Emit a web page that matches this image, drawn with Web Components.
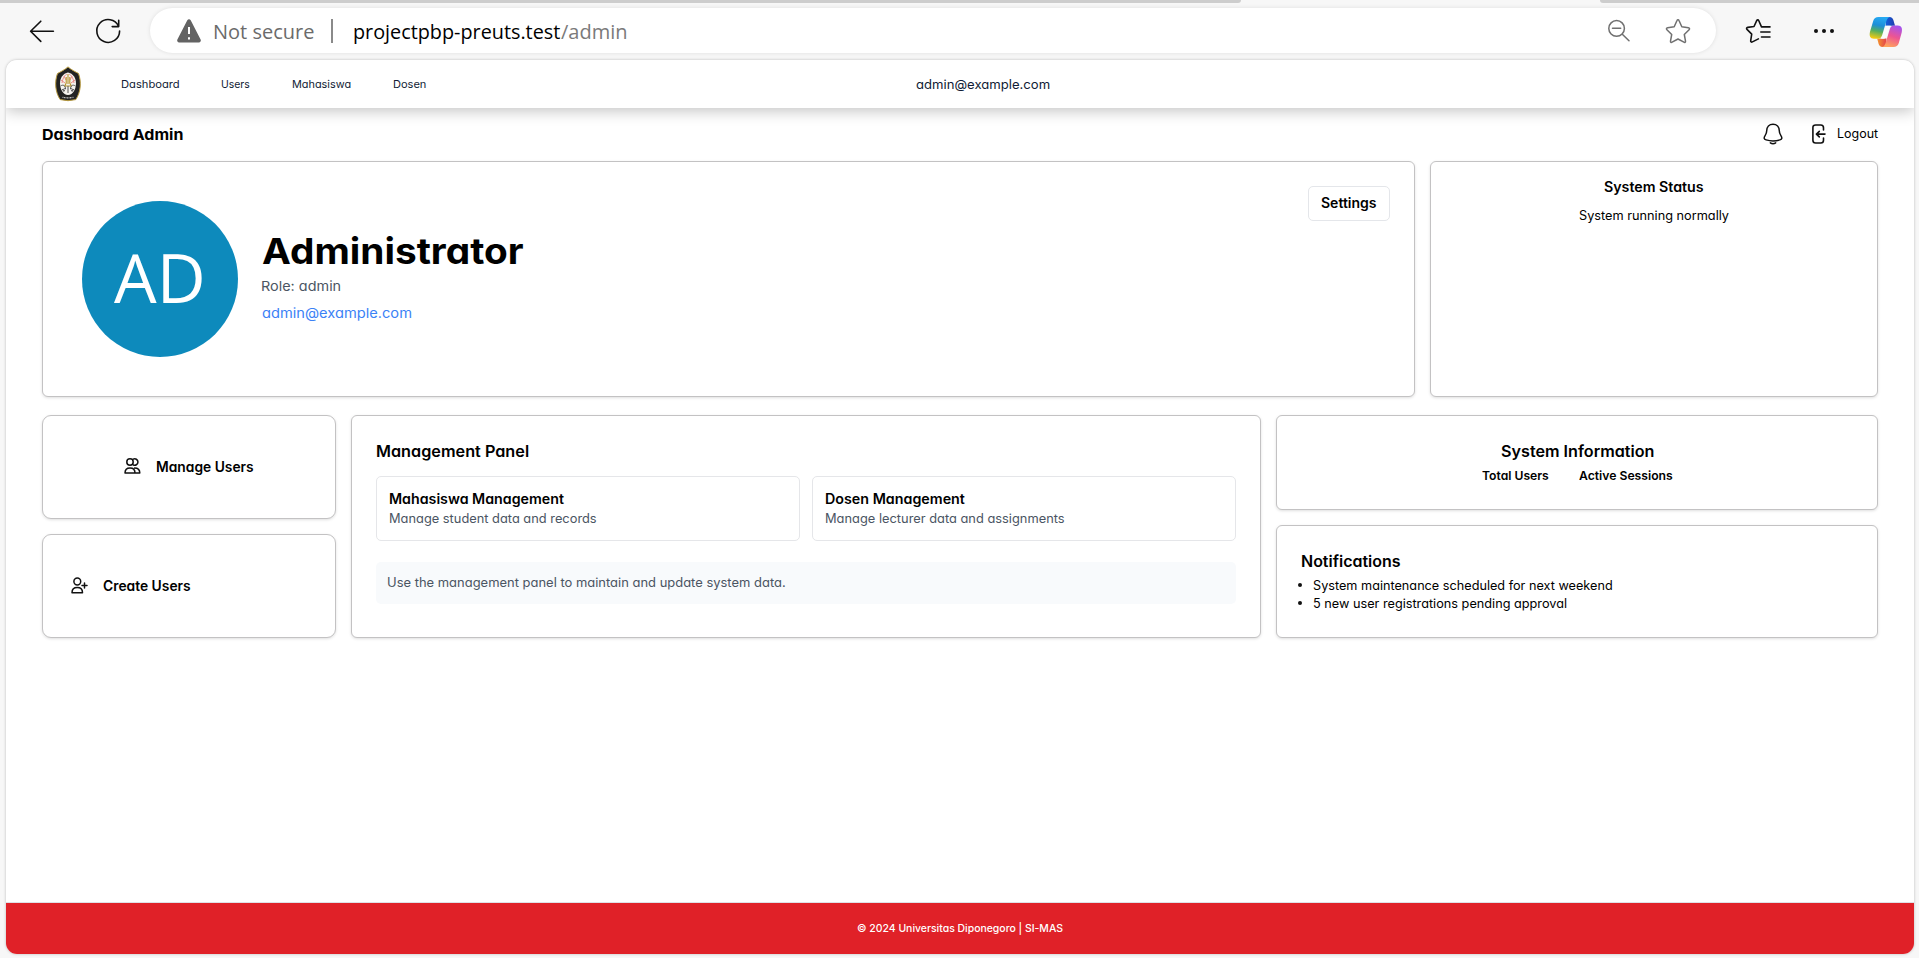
<!DOCTYPE html>
<html lang="id">
<head>
<meta charset="utf-8">
<title>Dashboard Admin</title>
<style>
html,body{margin:0;height:100%;overflow:hidden;background:#f7f7f7}
body{font-family:Inter,"Liberation Sans",sans-serif;color:#000}
</style>
</head>
<body>
<app-window></app-window>
<script>
const make=(name,html,after)=>customElements.define(name,class extends HTMLElement{
  connectedCallback(){
    if(!this.shadowRoot){this.attachShadow({mode:'open'}).innerHTML=html;}
    if(after)after(this);
  }
});

/* Single line label: widens its letters so that the ink spans the width in "w". */
const pen=document.createElement('canvas').getContext('2d');
function fit(el){
  const s=el.shadowRoot.querySelector('span'),w=+el.getAttribute('w');
  const size=el.getAttribute('size')||12.5,weight=el.getAttribute('weight')||400;
  el.style.fontSize=size+'px';el.style.fontWeight=weight;
  const t=el.textContent.trim();
  pen.font=`${weight} ${size}px ${getComputedStyle(el).fontFamily}`;
  const m=pen.measureText(t),bl=-m.actualBoundingBoxLeft,br=m.width-m.actualBoundingBoxRight;
  const ink=s.getBoundingClientRect().width-bl-br;
  const k=w/ink;
  s.style.transform=`scaleX(${k})`;
  s.style.marginLeft=-bl*k+'px';
  el.style.width=w+'px';
}

make('app-window',`<style>
:host{display:flex;flex-direction:column;height:958px;width:1919px}
.page{margin:8px 5px 4px 6px;flex:1;min-height:0;background:#fff;border-radius:11px;overflow:hidden;box-shadow:0 0 3px rgba(0,0,0,.25);display:flex;flex-direction:column}
main{flex:1;padding:0 36px;display:flex;flex-direction:column}
.top{display:grid;grid-template-columns:1373px 448px;gap:15px;height:236px}
.bottom{display:grid;grid-template-columns:294px 910px 602px;gap:15px;height:223px;margin-top:18px}
.col{display:flex;flex-direction:column;gap:15px}
.col>*{flex:1}.col .info{flex:none;height:95px}
</style>
<browser-bar></browser-bar>
<div class="page"><site-nav></site-nav>
<main><page-heading></page-heading>
<div class="top"><profile-card></profile-card><status-card></status-card></div>
<div class="bottom">
<div class="col"><action-card kind="users"><ui-text w="97" size="14" weight="600">Manage Users</ui-text></action-card>
<action-card kind="create"><ui-text w="88" size="14" weight="600">Create Users</ui-text></action-card></div>
<management-panel></management-panel>
<div class="col"><system-info class="info"></system-info><notice-card></notice-card></div>
</div></main><site-footer></site-footer></div>`);

make('browser-bar',`<style>
:host{display:block;height:52px;background:#f7f7f7;font-family:"Open Sans","Noto Sans",sans-serif}
.tabs{height:3px;display:flex;justify-content:space-between}
.tabs i{background:#cdcdcd;width:1241px;border-bottom-right-radius:3px}.tabs i+i{width:319px;border-radius:0 0 0 4px}
.row{display:flex;align-items:center;height:57px;box-sizing:border-box;padding:0 0 2px 28px}
svg{display:block;flex:none}
.url{width:1566px;height:45px;margin-left:28px;border-radius:23px;background:#fff;box-shadow:0 0 4px rgba(0,0,0,.1);display:flex;align-items:center;color:#6b6b6b}
.sep{width:1.5px;height:24px;background:#8a8a8a;margin:0 21px 0 17px}
ui-text{padding-top:1px}
</style><div class="tabs"><i></i><i></i></div>
<div class="row">
<svg width="28" height="26" viewBox="0 0 28 26" fill="none" stroke="#111" stroke-width="1.6" stroke-linecap="round" stroke-linejoin="round"><path d="M12.8 3.2 2.6 13.2l10.2 10.2M2.8 13.2h22.6"/></svg>
<svg style="margin-left:38px" width="28" height="28" viewBox="0 0 28 28" fill="none" stroke="#111" stroke-width="1.6" stroke-linecap="round" stroke-linejoin="round"><path d="M24.6 9.3A11.4 11.4 0 1 0 25.6 14M24.7 3.2v6.4h-6.5"/></svg>
<div class="url">
<svg style="margin-left:27px" width="24" height="24" viewBox="0 0 24 24"><path d="M10.3 1.3a2 2 0 0 1 3.4 0l9.9 19.3a2 2 0 0 1-1.8 2.9H2.2a2 2 0 0 1-1.8-2.9z" fill="#636363"/><path d="M12 8v7M12 18.2v2.2" stroke="#fff" stroke-width="2"/></svg>
<ui-text style="margin-left:14px" w="99" size="20.5">Not secure</ui-text><span class="sep"></span>
<ui-text style="color:#000" w="206" size="20.5">projectpbp-preuts.test</ui-text><ui-text style="margin-left:1px;color:#7a7a7a" w="65" size="20.5">/admin</ui-text>
<svg style="margin-left:981px" width="24" height="24" viewBox="0 0 24 24" fill="none" stroke="#707070" stroke-width="1.5" stroke-linecap="round"><circle cx="9.6" cy="9.4" r="7.8"/><path d="M15.3 15.2l6.7 6.6M5.5 9.2h8.2"/></svg>
<svg style="margin-left:34px" width="26" height="26" viewBox="0 0 26 26" fill="none" stroke="#707070" stroke-width="1.5" stroke-linejoin="round"><path d="M13 1.7c.5 0 .8.3 1 .8l2.8 6.2 6.6 1c1.2.2 1.5 1.2.7 2l-4.8 4.8 1.2 6.7c.1 1-.7 1.5-1.6 1L13 21l-5.9 3.2c-.9.5-1.7 0-1.6-1l1.2-6.7-4.8-4.8c-.8-.8-.5-1.8.7-2l6.6-1L12 2.5c.2-.5.5-.8 1-.8z"/></svg>
</div>
<svg style="margin-left:29px" width="26" height="26" viewBox="0 0 26 26" fill="none" stroke="#111" stroke-width="1.6" stroke-linecap="round" stroke-linejoin="round"><path d="M16.5 8.9 13.8 2.7c-.5-1.1-1.6-1.1-2.1 0L9 8.5l-6.3.9c-1.2.2-1.5 1.2-.7 2l4.7 4.7-1 6.6c-.2 1.2.7 1.7 1.7 1.2l6-3M16.5 8.9H25M15.8 14H25M16.5 19H25"/></svg>
<svg style="margin-left:42px;margin-top:1px" width="22" height="6" viewBox="0 0 22 6" fill="#111"><circle cx="3" cy="3" r="2"/><circle cx="11" cy="3" r="2"/><circle cx="19" cy="3" r="2"/></svg>
<svg style="margin-left:34px;margin-top:3px" width="34" height="30" viewBox="0 0 34 30"><defs>
<linearGradient id="a" x1=".5" y1="0" x2=".3" y2="1"><stop stop-color="#26a9f2"/><stop offset=".38" stop-color="#1d8ed8"/><stop offset=".65" stop-color="#54ae60"/><stop offset="1" stop-color="#f7cb10"/></linearGradient>
<linearGradient id="b" x1=".7" y1="0" x2=".35" y2="1"><stop stop-color="#a553ee"/><stop offset=".5" stop-color="#ed5592"/><stop offset="1" stop-color="#ffa45c"/></linearGradient>
<linearGradient id="c"><stop stop-color="#1260db"/><stop offset="1" stop-color="#203cad"/></linearGradient><linearGradient id="d"><stop stop-color="#f5992e"/><stop offset="1" stop-color="#e3404c"/></linearGradient></defs>
<path d="M17 0h3.500c2.300 0 3.300 1.300 4 3.500L26 8.800h-9.500z" fill="url(#c)"/>
<path d="M17 30h-3.500c-2.300 0-3.300-1.300-4-3.500L8.200 21.500h9.300z" fill="url(#d)"/>
<path d="M9.500 0H21c-2 .4-3 2-4 5.200l-3.900 13c-.9 2.500-2 3.500-4.600 3.500H5C1 21.700.1 18.500 1 14.700L4.200 4C5 1.200 6.700 0 9.500 0z" fill="url(#a)"/>
<path d="M24.500 30H13c2-.4 3-2 4-5.200l3.900-13c.9-2.300 2-3.200 4.600-3.200h3.200c4 0 4.900 3.200 4 7L29.800 26c-.8 2.800-2.500 4-5.300 4z" fill="url(#b)"/>
<path d="M17.200 8.800h4.600c-1 .6-1.400 1.500-1.800 2.800l-2.200 7.500c-.6 1.900-1.700 2.700-3.300 2.700h-3c1-.6 1.500-1.500 1.900-2.800z" fill="#fbfbfb"/></svg>
</div>`);

make('site-nav',`<style>
:host{display:flex;align-items:center;height:48px;flex:none;padding-left:48px;box-shadow:0 3px 14px rgba(0,0,0,.24);color:#111c35;background:#fff;position:relative}
nav{display:flex;gap:42px;margin-left:39px}
svg{display:block}
</style>
<svg width="28" height="36" viewBox="0 0 28 36"><path d="M14 .9C17 3.500 21.500 6 24.500 7.500 27.600 16 26.800 26 21.800 33.600Q14 35.800 6.200 33.600C1.200 26 .4 16 3.500 7.500 6.500 6 11 3.500 14 .9z" fill="#222" stroke="#b89a3e" stroke-width="1"/>
<path d="M14 6.500c5 1 8 5.500 8 11S19 29 14 29s-8-6-8-11.500S9 7.500 14 6.500z" fill="#f5f3ee"/>
<path d="M8 17c1-6 3-8 5-9M20 17c-1-6-3-8-5-9M7 14l4 3M21 14l-4 3M10 10l2 4M18 10l-2 4" stroke="#ea8c88" stroke-width="1" fill="none"/>
<path d="M12.200 11v6l-1.500 3h6.600l-1.500-3v-6M14 8v10" stroke="#b8942c" stroke-width="1.100" fill="none"/>
<path d="M6.500 20c3-2 5 0 5 3-2-1-3 .5-1.500 2.800M21.500 20c-3-2-5 0-5 3 2-1 3 .5 1.500 2.800M14 20v7M8 23.500l3 1M20 23.500l-3 1" stroke="#555" stroke-width="1" fill="none"/><path d="M8.500 31.300q5.500 1 11 0" stroke="#bbb" stroke-width="1.300" stroke-dasharray="1 .5" fill="none"/></svg>
<nav><ui-text w="58" size="10.8">Dashboard</ui-text><ui-text w="29" size="10.8">Users</ui-text><ui-text w="59" size="10.8">Mahasiswa</ui-text><ui-text w="33" size="10.8">Dosen</ui-text></nav>
<ui-text style="margin-left:490px" w="134" size="12.7">admin@example.com</ui-text>`);

make('page-heading',`<style>
:host{display:flex;align-items:center;height:53px;box-sizing:border-box}
svg{display:block}.bell{margin-left:auto;margin-top:-1px}.out{margin:-1px 12px 0 29px}.lo{margin-top:-2px}
</style><ui-text w="141" size="15" weight="700">Dashboard Admin</ui-text>
<svg class="bell" width="20" height="22" viewBox="0 0 20 22" fill="none" stroke="#111" stroke-width="1.5" stroke-linecap="round" stroke-linejoin="round"><path d="M10 1.200C6.200 1.200 3.800 4 3.700 7.800c0 2-.5 3.200-1.600 4.800C.7 14.800.8 16.200 3.100 16.900c4.400 1.300 9.400 1.300 13.800 0 2.300-.7 2.400-2.100 1-4.300-1.100-1.600-1.600-2.800-1.600-4.800C16.200 4 13.800 1.200 10 1.200zM7.300 19.800c1.500 1 3.900 1 5.400 0"/></svg>
<svg class="out" width="14" height="20" viewBox="0 0 14 20" fill="none" stroke="#111" stroke-width="1.6" stroke-linecap="round" stroke-linejoin="round"><path d="M11.500 6V3.700c0-1.800-.9-2.700-2.700-2.700H3.600C1.800 1 .9 1.900.9 3.700v12.500c0 1.900.9 2.800 2.700 2.800h5.200c1.800 0 2.700-.9 2.700-2.800v-2.100M13 10.100H5M7.300 7.300l-2.900 2.800 2.900 2.800"/></svg>
<ui-text class="lo" w="40" size="12.5">Logout</ui-text>`);

const card='border:1px solid #c3c2c3;border-radius:6px;box-shadow:0 1px 3px rgba(0,0,0,.13);box-sizing:border-box;background:#fff;';

make('profile-card',`<style>
:host{${card}display:flex;align-items:flex-start;padding:39px 24px 0 39px}
.av{width:156px;height:156px;border-radius:50%;background:#0d8abc;color:#fff;display:flex;align-items:center;justify-content:center;font-family:"Open Sans",sans-serif}
.av ui-text{margin:-5px 4px 0 0}
.who{margin-left:24px;padding-top:28px;display:flex;flex-direction:column}
button{all:unset;box-sizing:border-box;margin:-15px 0 0 auto;width:82px;height:35px;border:1px solid #e4e6ea;border-radius:5px;display:flex;align-items:center;justify-content:center}
button ui-text{margin-top:-1px}
</style><div class="av"><ui-text w="88" size="67">AD</ui-text></div>
<div class="who"><ui-text w="261" size="35.5" weight="700" style="line-height:46px">Administrator</ui-text>
<ui-text w="78" size="13.6" style="color:#4b5563;line-height:24px;margin-top:-1px">Role: admin</ui-text>
<ui-text w="149" size="13.6" style="color:#3b82f6;line-height:24px;margin-top:3px">admin@example.com</ui-text></div>
<button><ui-text w="56" size="13.8" weight="600">Settings</ui-text></button>`);

make('status-card',`<style>:host{${card}display:flex;flex-direction:column;align-items:center;padding-top:14px}</style>
<ui-text w="100" size="13.8" weight="600" style="line-height:22px">System Status</ui-text>
<ui-text w="150" size="12.5" style="line-height:20px;margin-top:8px">System running normally</ui-text>`);

make('action-card',`<style>
:host{${card}border-radius:9px;display:flex;align-items:center;padding-left:28px;padding-bottom:2px}
:host([kind=users]){padding-left:81px}
svg{display:block;margin-right:16px;flex:none}
:host([kind=create]) svg{margin-right:15px}
:host([kind=users]) .c,:host([kind=create]) .u{display:none}
</style>
<svg class="u" width="17" height="16" viewBox="0 0 17 16" fill="none" stroke="#111" stroke-width="1.5" stroke-linejoin="round" stroke-linecap="round"><circle cx="6" cy="4" r="3.2"/><path d="M9.200 1.200a3.200 3.200 0 1 1 0 5.600M1 15c0-3.400 1.500-5 5-5s5 1.600 5 5zM10.500 10c3.800 0 5.300 1.700 5.300 5H11"/></svg>
<svg class="c" width="17" height="17" viewBox="0 0 17 17" fill="none" stroke="#111" stroke-width="1.5" stroke-linejoin="round" stroke-linecap="round"><circle cx="6.3" cy="4.5" r="3.4"/><path d="M1 15.800c0-3.500 1.700-5.200 5.300-5.200s5.200 1.700 5.200 5.200zM13.500 6v5M11 8.500h5"/></svg>
<slot></slot>`);

make('management-panel',`<style>
:host{${card}padding:24px;display:flex;flex-direction:column}
.g{display:grid;grid-template-columns:1fr 1fr;gap:12px;margin-top:14px}
.m{box-sizing:border-box;height:65px;border:1px solid #e5e6e9;border-radius:5px;padding:12px;display:flex;flex-direction:column}
.m .d,.n{color:#4b5563}.m ui-text{line-height:20px}
.n{margin-top:21px;height:42px;box-sizing:border-box;padding-bottom:1px;border-radius:5px;background:#f8fafc;padding-left:12px;display:flex;align-items:center}
.g ui-text,.t{position:relative;left:.7px}
</style><ui-text class="t" w="151" size="15.5" weight="600" style="line-height:23px;margin-bottom:-1px">Management Panel</ui-text>
<div class="g"><div class="m"><ui-text w="174" size="13.8" weight="600">Mahasiswa Management</ui-text><ui-text class="d" w="206" size="12.5">Manage student data and records</ui-text></div>
<div class="m"><ui-text w="139" size="13.8" weight="600">Dosen Management</ui-text><ui-text class="d" w="238" size="12.5">Manage lecturer data and assignments</ui-text></div></div>
<div class="n"><ui-text w="397" size="12.5">Use the management panel to maintain and update system data.</ui-text></div>`);

make('system-info',`<style>:host{${card}padding-top:24px;display:flex;flex-direction:column;align-items:center}div{display:flex;gap:30px;margin-top:4px}div ui-text{line-height:20px}</style>
<ui-text w="153" size="15.5" weight="600" style="line-height:23px;margin-bottom:-1px">System Information</ui-text>
<div><ui-text w="67" size="12.3" weight="600">Total Users</ui-text><ui-text w="94" size="12.3" weight="600">Active Sessions</ui-text></div>`);

make('notice-card',`<style>:host{${card}padding:24px 24px 24px 25px}
ul{list-style:none;margin:4px 0 0 -4px;padding:0}li{display:flex;align-items:center;height:18px}
li::before{content:"";width:4px;height:4px;border-radius:50%;background:#111;margin-right:11px}
</style><ui-text w="98" size="15.5" weight="600" style="line-height:23px;margin-bottom:-1px">Notifications</ui-text>
<ul><li><ui-text w="299" size="12.5">System maintenance scheduled for next weekend</ui-text></li><li><ui-text w="254" size="12.5">5 new user registrations pending approval</ui-text></li></ul>`);

make('site-footer',`<style>:host{display:flex;flex:none;align-items:center;justify-content:center;height:51px;box-sizing:border-box;padding-bottom:1px;background:#e02128;color:#fff;box-shadow:0 -1px #dfe1e6}</style>
<ui-text w="206" size="10.8" weight="500">© 2024 Universitas Diponegoro | SI-MAS</ui-text>`);

make('ui-text',`<style>:host{display:block;white-space:nowrap;flex:none;font-feature-settings:"cv11"}span{display:inline-block;transform-origin:0 50%}</style><span><slot></slot></span>`,fit);
</script>
</body>
</html>
